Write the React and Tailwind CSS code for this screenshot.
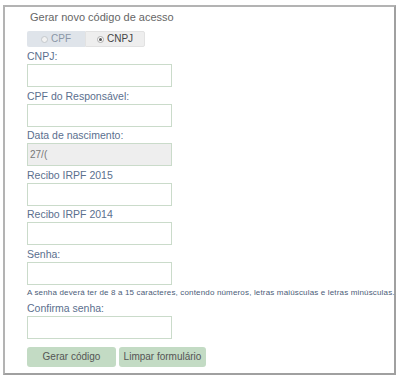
import React from 'react';

function Field({ label, children }) {
  return (
    <div className="flex flex-col">
      <label className="h-[16px] leading-[16px] text-[10.5px] text-[#5b6f8e]">{label}</label>
      {children}
    </div>
  );
}

function TextInput({ value, disabled }) {
  return (
    <input
      type="text"
      defaultValue={value}
      readOnly={disabled}
      className={
        'w-[145px] h-[23px] border border-[#cadbca] px-[2px] text-[10px] text-[#777] outline-none ' +
        (disabled ? 'bg-[#eeeeee]' : 'bg-white')
      }
    />
  );
}

export default function App() {
  return (
    <div className="w-[400px] h-[377px] bg-white pt-[5px] pl-[3px] font-['Liberation_Sans',Arial,sans-serif]">
      <div className="w-[393px] h-[370px] border-2 border-[#b3b3b3] border-r-[#a0a0a0] border-b-[#a0a0a0] pl-[22px]">
        {/* Title */}
        <h1 className="pl-[3px] pt-[2px] h-[24px] leading-[16px] text-[11px] text-[#666]">
          Gerar novo código de acesso
        </h1>

        {/* CPF / CNPJ toggle */}
        <div className="flex w-[118px] h-[16px] text-[10px] leading-[16px]">
          <label className="flex w-[58px] items-center justify-center gap-[3px] bg-[#dfe4ea] text-[#8a96a6] rounded-l-[2px]">
            <span className="w-[7px] h-[7px] rounded-full border border-[#c4c8cc] bg-[#f2f2f2]" />
            CPF
          </label>
          <label className="flex flex-1 items-center justify-center gap-[3px] bg-[#eeeeee] text-[#444] border border-[#e2e2e2] rounded-r-[2px]">
            <span className="w-[7px] h-[7px] rounded-full border border-[#aaa] bg-white flex items-center justify-center">
              <span className="w-[3px] h-[3px] rounded-full bg-[#555]" />
            </span>
            CNPJ
          </label>
        </div>

        <div className="flex flex-col gap-[0.6px] mt-[1px]">
          <Field label="CNPJ:">
            <TextInput />
          </Field>
          <Field label="CPF do Responsável:">
            <TextInput />
          </Field>
          <Field label="Data de nascimento:">
            <TextInput value="27/(" disabled />
          </Field>
          <Field label="Recibo IRPF 2015">
            <TextInput />
          </Field>
          <Field label="Recibo IRPF 2014">
            <TextInput />
          </Field>
          <Field label="Senha:">
            <TextInput />
          </Field>
        </div>
        <p className="h-[13px] leading-[13px] mt-[1px] text-[8px] tracking-[0.16px] text-[#4b5d78] whitespace-nowrap">
          A senha deverá ter de 8 a 15 caracteres, contendo números, letras maiúsculas e letras minúsculas.
        </p>
        <div className="mt-[1px]">
          <Field label="Confirma senha:">
            <TextInput />
          </Field>
        </div>

        {/* Buttons */}
        <div className="flex gap-[3px] mt-[8px]">
          <button className="w-[89px] h-[20px] rounded-[3px] bg-[#c3dbc4] text-[10px] text-[#555]">
            Gerar código
          </button>
          <button className="w-[87px] h-[20px] rounded-[3px] bg-[#c3dbc4] text-[10px] text-[#555]">
            Limpar formulário
          </button>
        </div>
      </div>
    </div>
  );
}
